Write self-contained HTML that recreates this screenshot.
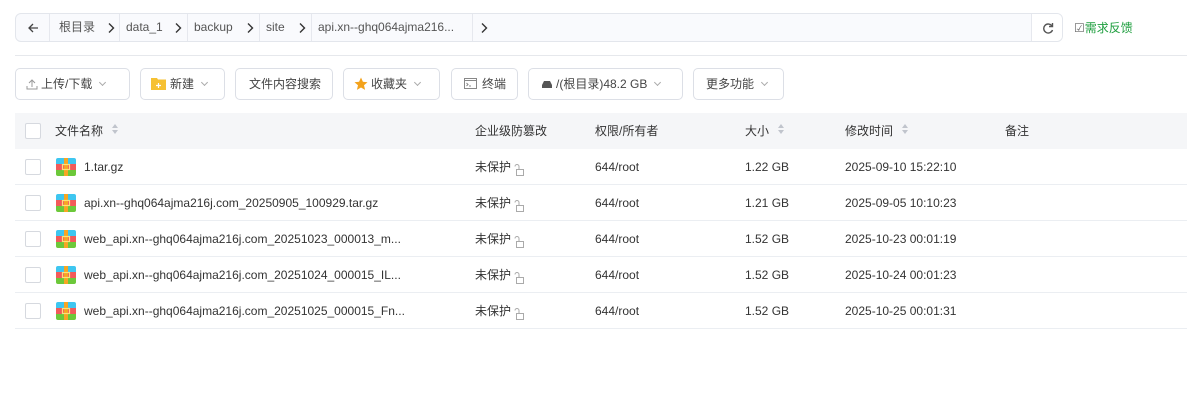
<!DOCTYPE html>
<html><head><meta charset="utf-8"><style>
*{box-sizing:border-box;margin:0;padding:0}
body{width:1187px;height:405px;background:#fff;font-family:"Liberation Sans","Noto Sans CJK SC",sans-serif;font-size:12px;color:#333;position:relative;overflow:hidden}
.abs{position:absolute}
.bc{left:15px;top:13px;width:1048px;height:29px;border:1px solid #e3e6ec;border-radius:6px;background:#f9fafd;overflow:hidden}
.bc span{position:absolute;top:0;height:27px;line-height:27px;color:#555;font-size:12px}
.bc .ch{top:8px;height:12px;line-height:0}
.sep{border-left:1px solid #e6e8ee}
.btn{position:absolute;top:68px;height:32px;border:1px solid #dcdfe6;border-radius:5px;background:#fff;line-height:30px;font-size:12px;color:#444;padding-left:10px}
.chev{display:inline-block;width:5px;height:5px;border-right:1px solid #aaa;border-bottom:1px solid #aaa;transform:rotate(45deg);margin-left:8px;position:relative;top:-3px}
.hdr{left:15px;top:113px;width:1172px;height:36px;background:#f5f6f8}
.row{position:absolute;left:15px;width:1172px;height:36px;border-bottom:1px solid #ebeef2}
.cell{position:absolute;top:0;line-height:36px;font-size:12px;color:#333;white-space:nowrap}
.cb{position:absolute;left:10px;top:10px;width:16px;height:16px;border:1px solid #d6d9df;border-radius:2px;background:#fff}
.ico{position:absolute;left:41px;top:9px;width:20px;height:18px;border-radius:2px;overflow:hidden}
.sort{display:inline-block;margin-left:8px;vertical-align:middle;position:relative;top:-1px}
</style></head><body>
<div class="abs bc">
<span style="left:0;width:33px;top:8px;height:12px;line-height:0;text-align:center"><svg width="12" height="12"><path d="M11 6H2M6 2L2 6L6 10" stroke="#444" stroke-width="1.3" fill="none"/></svg></span>
<span class="sep" style="left:33px;padding-left:9px;width:52px">根目录</span>
<span class="ch" style="left:91px"><svg width="8" height="12"><path d="M2 1.5L6.5 6L2 10.5" stroke="#333" stroke-width="1.4" fill="none"/></svg></span>
<span class="sep" style="left:103px;padding-left:6px">data_1</span>
<span class="ch" style="left:158px"><svg width="8" height="12"><path d="M2 1.5L6.5 6L2 10.5" stroke="#333" stroke-width="1.4" fill="none"/></svg></span>
<span class="sep" style="left:171px;padding-left:6px">backup</span>
<span class="ch" style="left:230px"><svg width="8" height="12"><path d="M2 1.5L6.5 6L2 10.5" stroke="#333" stroke-width="1.4" fill="none"/></svg></span>
<span class="sep" style="left:243px;padding-left:6px">site</span>
<span class="ch" style="left:282px"><svg width="8" height="12"><path d="M2 1.5L6.5 6L2 10.5" stroke="#333" stroke-width="1.4" fill="none"/></svg></span>
<span class="sep" style="left:295px;padding-left:6px">api.xn--ghq064ajma216...</span>
<span class="sep" style="left:456px;width:20px;padding-left:7px;top:0;height:27px;line-height:0"><svg width="8" height="12" style="margin-top:8px"><path d="M2 1.5L6.5 6L2 10.5" stroke="#333" stroke-width="1.4" fill="none"/></svg></span>
<span class="sep" style="left:1015px;width:33px;background:#fff;text-align:center;line-height:0"><svg width="12" height="12" style="margin-top:8px"><path d="M10 4A4.5 4.5 0 1 0 10.5 8" stroke="#555" stroke-width="1.4" fill="none"/><path d="M10.5 1V4.5H7" stroke="#555" stroke-width="1.4" fill="none"/></svg></span>
</div>
<div class="abs" style="left:1074px;top:19px;font-size:12px;color:#1e9e3e"><span style="color:#666">☑</span>需求反馈</div>
<div class="abs" style="left:15px;top:55px;width:1172px;border-top:1px solid #e6e8ec"></div>

<div class="btn" style="left:15px;width:115px"><svg width="12" height="12" style="vertical-align:middle;position:relative;top:-1px;margin-right:3px"><path d="M6 9V2M3 5L6 2L9 5M1 8V11H11V8" stroke="#999" fill="none"/></svg>上传/下载<i class="chev"></i></div>
<div class="btn" style="left:140px;width:85px"><svg width="15" height="13" style="vertical-align:middle;position:relative;top:-1px;margin-right:4px"><path d="M0 1H6L7 2.5H15V13H0Z" fill="#f6c133"/><path d="M7.5 6V11M5 8.5H10" stroke="#fff" stroke-width="1.2"/></svg>新建<i class="chev"></i></div>
<div class="btn" style="left:235px;width:98px;padding-left:13px">文件内容搜索</div>
<div class="btn" style="left:343px;width:97px"><svg width="14" height="14" style="vertical-align:middle;position:relative;top:-1px;margin-right:3px"><path d="M7 0.5L8.9 4.8L13.5 5.2L10 8.3L11.1 12.9L7 10.5L2.9 12.9L4 8.3L0.5 5.2L5.1 4.8Z" fill="#f3a21c"/></svg>收藏夹<i class="chev"></i></div>
<div class="btn" style="left:451px;width:67px;padding-left:12px"><svg width="13" height="11" style="vertical-align:middle;position:relative;top:-1px;margin-right:5px"><rect x="0.5" y="0.5" width="12" height="10" fill="none" stroke="#888"/><path d="M0.5 2.5H12.5" stroke="#888"/><path d="M2.5 5L4 6.5L2.5 8M5 8H7" stroke="#888" fill="none"/></svg>终端</div>
<div class="btn" style="left:528px;width:155px;padding-left:13px"><svg width="10" height="8" style="vertical-align:middle;position:relative;top:-1px;margin-right:4px"><path d="M2 1H8L10 5V8H0V5Z" fill="#555"/></svg>/(根目录)48.2 GB<i class="chev"></i></div>
<div class="btn" style="left:693px;width:91px;padding-left:12px">更多功能<i class="chev"></i></div>

<div class="abs hdr">
<div class="cb"></div>
<div class="cell" style="left:40px">文件名称<span class="sort"><svg width="8" height="12"><path d="M4 1L7 5H1Z M4 11L7 7H1Z" fill="#c0c4cc"/></svg></span></div>
<div class="cell" style="left:460px">企业级防篡改</div>
<div class="cell" style="left:580px">权限/所有者</div>
<div class="cell" style="left:730px">大小<span class="sort"><svg width="8" height="12"><path d="M4 1L7 5H1Z M4 11L7 7H1Z" fill="#c0c4cc"/></svg></span></div>
<div class="cell" style="left:830px">修改时间<span class="sort"><svg width="8" height="12"><path d="M4 1L7 5H1Z M4 11L7 7H1Z" fill="#c0c4cc"/></svg></span></div>
<div class="cell" style="left:990px">备注</div>
</div>

<div id="rows"></div>
<script>
var d=[["1.tar.gz","1.22 GB","2025-09-10 15:22:10"],["api.xn--ghq064ajma216j.com_20250905_100929.tar.gz","1.21 GB","2025-09-05 10:10:23"],["web_api.xn--ghq064ajma216j.com_20251023_000013_m...","1.52 GB","2025-10-23 00:01:19"],["web_api.xn--ghq064ajma216j.com_20251024_000015_IL...","1.52 GB","2025-10-24 00:01:23"],["web_api.xn--ghq064ajma216j.com_20251025_000015_Fn...","1.52 GB","2025-10-25 00:01:31"]];
var lock='<svg width="12" height="12" style="vertical-align:middle;margin-left:2px;position:relative;top:2px"><path d="M2 2.5A2 2 0 0 1 6 2.5V5" stroke="#aaa" fill="none"/><rect x="3.5" y="5.5" width="7" height="6" fill="none" stroke="#aaa"/></svg>';
var h="";d.forEach(function(r,i){h+='<div class="row" style="top:'+(149+i*36)+'px"><div class="cb"></div><div class="ico"><svg width="20" height="18"><rect width="20" height="6" fill="#3ec6f0"/><rect y="6" width="20" height="6" fill="#f25a5a"/><rect y="12" width="20" height="6" fill="#6cc83a"/><rect x="8" width="4" height="18" fill="#f6a623"/><rect x="6.5" y="6.5" width="7" height="5" fill="none" stroke="#fbe27a" stroke-width="1.2"/></svg></div><div class="cell" style="left:69px">'+r[0]+'</div><div class="cell" style="left:460px">未保护'+lock+'</div><div class="cell" style="left:580px">644/root</div><div class="cell" style="left:730px">'+r[1]+'</div><div class="cell" style="left:830px">'+r[2]+'</div></div>'});
document.getElementById("rows").innerHTML=h;
</script>
</body></html>
